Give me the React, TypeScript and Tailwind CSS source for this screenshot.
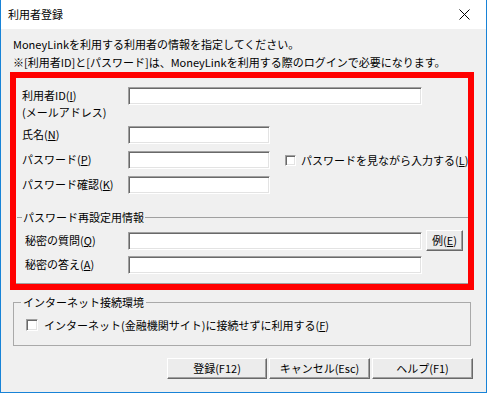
import type { ReactNode } from "react";

const font = { fontFamily: '"Noto Sans CJK JP", "Liberation Sans", sans-serif' };

function Field({ w }: { w: string }) {
  return (
    <div
      className={`${w} h-[18px] shrink-0 bg-white border border-t-[#a0a0a0] border-l-[#a0a0a0] border-b-white border-r-white shadow-[inset_1px_1px_0_#696969,inset_-1px_-1px_0_#e3e3e3]`}
    />
  );
}

function Check({ size }: { size: string }) {
  return (
    <div
      className={`${size} shrink-0 bg-white border border-t-[#a0a0a0] border-l-[#a0a0a0] border-b-white border-r-white shadow-[inset_1px_1px_0_#696969,inset_-1px_-1px_0_#e3e3e3]`}
    />
  );
}

function Btn({ children, w }: { children: ReactNode; w: string }) {
  return (
    <button className={`${w} h-[21px] shrink-0 flex items-center justify-center bg-[#ececec] border border-t-white border-l-white border-b-[#696969] border-r-[#696969] shadow-[inset_-1px_-1px_0_#a0a0a0] text-[11px] leading-none text-black`}>
      {children}
    </button>
  );
}

function Row({ label, h, children }: { label: ReactNode; h: string; children: ReactNode }) {
  return (
    <div className={`flex items-start ${h}`}>
      <div className="w-[106px] shrink-0 leading-[17px] whitespace-nowrap">{label}</div>
      {children}
    </div>
  );
}

export default function App() {
  return (
    <div
      style={font}
      className="w-[487px] h-[393px] flex flex-col bg-[#f0f0f0] border-x border-b border-[#1883d7] text-[11px] text-black overflow-hidden"
    >
      {/* title bar */}
      <div className="h-[29px] shrink-0 bg-white flex items-center justify-between pl-[7px] pr-[16px]">
        <span className="text-[11px] leading-none">利用者登録</span>
        <svg width="11" height="11" viewBox="0 0 11 11">
          <path d="M0.5 0.5 L10.5 10.5 M10.5 0.5 L0.5 10.5" stroke="#000" strokeWidth="1" />
        </svg>
      </div>

      {/* description */}
      <div className="pl-[12px] pt-[6px] leading-[18px] whitespace-nowrap">
        <p>MoneyLinkを利用する利用者の情報を指定してください。</p>
        <p>※[利用者ID]と[パスワード]は、MoneyLinkを利用する際のログインで必要になります。</p>
      </div>

      {/* highlighted section */}
      <div className="ml-[9px] mt-[1px] w-[464px] h-[218px] shrink-0 border-[6px] border-[#ff0000] overflow-hidden">
        <div className="pl-[6px] pt-[9px] flex flex-col">
          <Row
            h="h-[39px]"
            label={
              <>
                <div>利用者ID(<u>I</u>)</div>
                <div>(メールアドレス)</div>
              </>
            }
          >
            <Field w="w-[294px]" />
          </Row>
          <Row h="h-[25px]" label={<span>氏名(<u>N</u>)</span>}>
            <Field w="w-[142px]" />
          </Row>
          <Row h="h-[25px]" label={<span>パスワード(<u>P</u>)</span>}>
            <Field w="w-[142px]" />
            <div className="flex items-center ml-[15px] mt-[3px] gap-[5px] whitespace-nowrap leading-[12px]">
              <Check size="w-[11px] h-[11px]" />
              <span>
                パスワードを見ながら入力する(<u>L</u>)
              </span>
            </div>
          </Row>
          <Row h="h-[25px]" label={<span>パスワード確認(<u>K</u>)</span>}>
            <Field w="w-[142px]" />
          </Row>
        </div>

        {/* password reset group */}
        <div className="mt-[9px] flex items-center h-[14px]">
          <div className="w-[5px] h-px bg-[#a0a0a0] ml-[1px]" />
          <span className="px-[1px] leading-[14px]">パスワード再設定用情報</span>
          <div className="flex-1 h-px bg-[#a0a0a0]" />
        </div>
        <div className="pl-[9px] mt-[6px] flex flex-col gap-[3px]">
          <div className="flex items-center h-[21px]">
            <span className="w-[103px] shrink-0">秘密の質問(<u>Q</u>)</span>
            <Field w="w-[294px]" />
            <div className="ml-[4px]">
              <Btn w="w-[37px]">
                例(<u>E</u>)
              </Btn>
            </div>
          </div>
          <div className="flex items-center h-[21px]">
            <span className="w-[103px] shrink-0">秘密の答え(<u>A</u>)</span>
            <Field w="w-[294px]" />
          </div>
        </div>
        <div className="mt-[8px] h-px bg-[#a0a0a0]" />
      </div>

      {/* internet group */}
      <fieldset className="ml-[12px] mt-[5px] w-[458px] h-[51px] shrink-0 border border-[#a9a9a9] pl-[7px] pr-0 pb-0 pt-0 m-0">
        <legend className="px-[2px] leading-[14px]">インターネット接続環境</legend>
        <div className="flex items-center mt-[8px] ml-[5px] gap-[6px] leading-[16px]">
          <Check size="w-[12px] h-[12px]" />
          <span>
            インターネット(金融機関サイト)に接続せずに利用する(<u>F</u>)
          </span>
        </div>
      </fieldset>

      {/* buttons */}
      <div className="flex justify-end gap-[2px] pr-[13px] mt-[12px]">
        <Btn w="w-[100px]">登録(F12)</Btn>
        <Btn w="w-[101px]">キャンセル(Esc)</Btn>
        <Btn w="w-[101px]">ヘルプ(F1)</Btn>
      </div>
    </div>
  );
}
